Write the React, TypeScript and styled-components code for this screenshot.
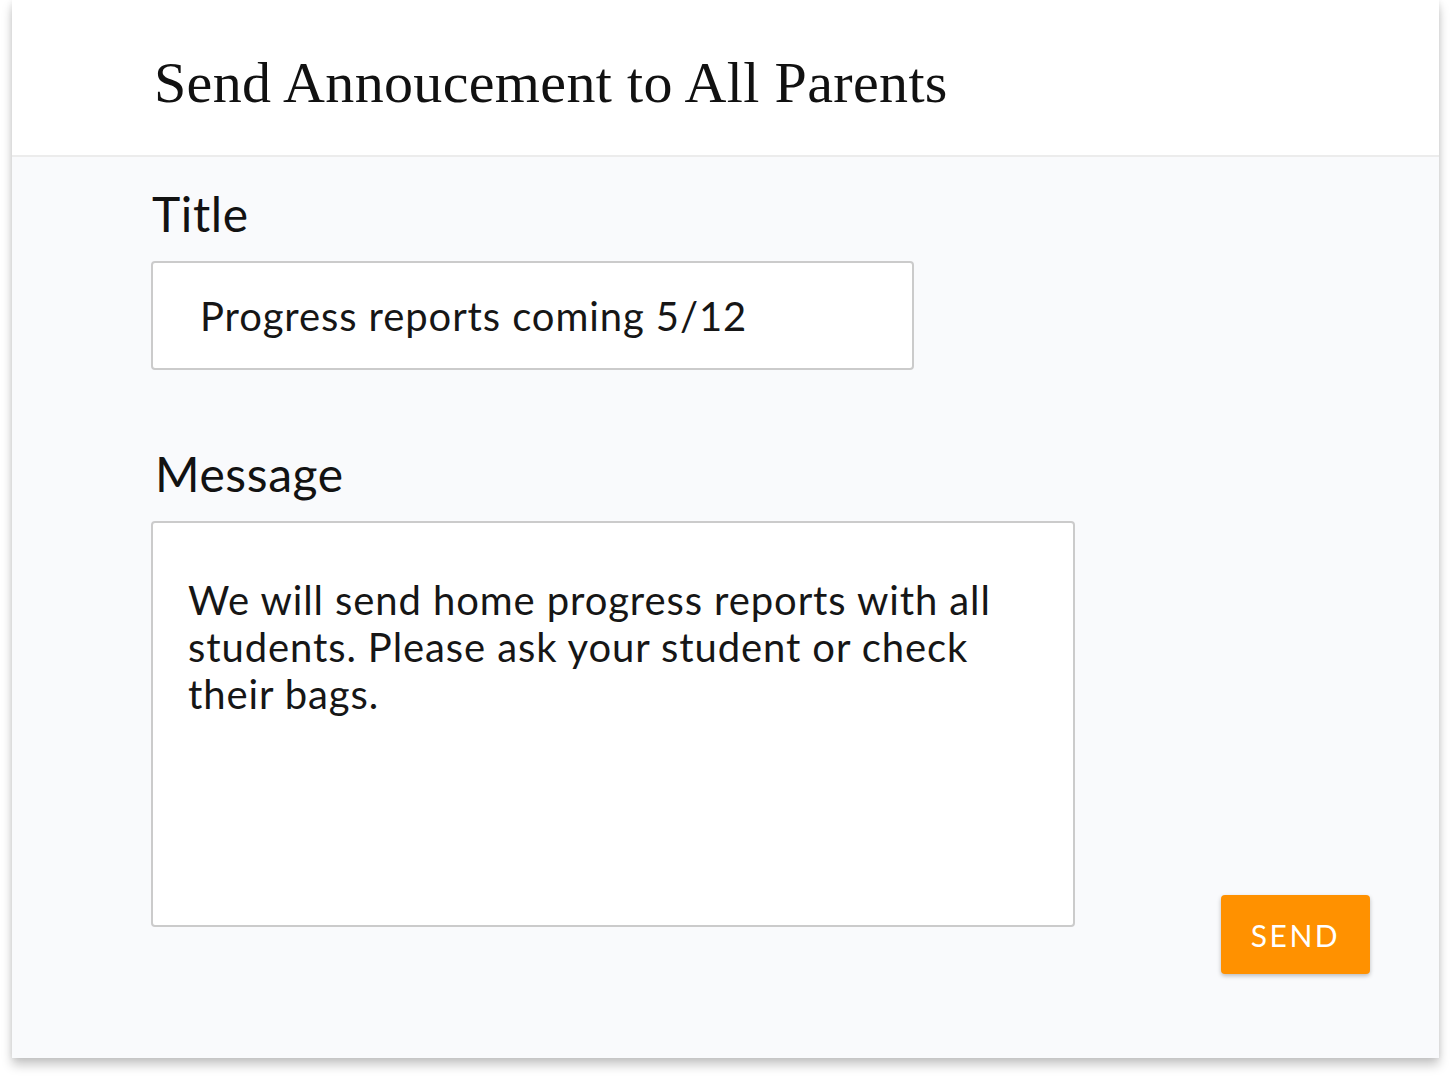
import React from "react";
import styled, { createGlobalStyle } from "styled-components";

const Global = createGlobalStyle`
  html, body { margin: 0; padding: 0; background: #ffffff; }
  * { box-sizing: border-box; }
`;

const Page = styled.div`
  padding: 0 13px 25px 12px;
  width: 1452px;
  height: 1083px;
  overflow: hidden;
`;

const Card = styled.section`
  width: 1427px;
  height: 1058px;
  background: #f9fafc;
  display: flex;
  flex-direction: column;
  box-shadow: 0 7px 10px rgba(0, 0, 0, 0.22), 0 0 6px rgba(0, 0, 0, 0.08);
`;

const Header = styled.header`
  height: 157px;
  flex: none;
  background: #ffffff;
  border-bottom: 2px solid #ececec;
  display: flex;
  align-items: center;
  padding-left: 142px;
  padding-top: 10px;
`;

const Heading = styled.h1`
  margin: 0;
  font-family: "Liberation Serif", "Times New Roman", serif;
  font-weight: 400;
  font-size: 58px;
  color: #111111;
  letter-spacing: 0.35px;
`;

const Body = styled.div`
  position: relative;
  flex: 1;
  padding: 29px 0 0 139px;
  display: flex;
  flex-direction: column;
  font-family: Lato, "Open Sans", sans-serif;
`;

const Label = styled.label<{ $top?: number }>`
  display: block;
  font-size: 48px;
  line-height: 56px;
  color: #121212;
  letter-spacing: 0.6px;
  margin-top: ${(p) => p.$top ?? 0}px;
  margin-left: ${(p) => (p.$top ? 4 : 1)}px;
`;

const TextInput = styled.input`
  margin-top: 19px;
  width: 763px;
  height: 109px;
  border: 2px solid #cbcbcb;
  border-radius: 4px;
  background: #ffffff;
  padding: 0 0 0 47px;
  font-family: Lato, "Open Sans", sans-serif;
  font-size: 40px;
  color: #161616;
  letter-spacing: 0.9px;
  outline: none;
`;

const TextArea = styled.textarea`
  margin-top: 19px;
  width: 924px;
  height: 406px;
  border: 2px solid #cbcbcb;
  border-radius: 4px;
  background: #ffffff;
  padding: 54px 60px 0 35px;
  font-family: Lato, "Open Sans", sans-serif;
  font-size: 40px;
  line-height: 47px;
  color: #161616;
  letter-spacing: 0.9px;
  resize: none;
  outline: none;
`;

const Footer = styled.div`
  position: absolute;
  right: 69px;
  bottom: 84px;
`;

const SendButton = styled.button`
  width: 149px;
  height: 79px;
  border: none;
  border-radius: 4px;
  background: #ff9100;
  color: #ffffff;
  font-family: Lato, "Open Sans", sans-serif;
  font-size: 30px;
  letter-spacing: 2.5px;
  box-shadow: 0 2px 4px rgba(0, 0, 0, 0.25);
  cursor: pointer;
`;

export default function App() {
  return (
    <Page>
      <Global />
      <Card>
        <Header>
          <Heading>Send Annoucement to All Parents</Heading>
        </Header>
        <Body>
          <Label>Title</Label>
          <TextInput readOnly value="Progress reports coming 5/12" />
          <Label $top={76}>Message</Label>
          <TextArea
            readOnly
            value="We will send home progress reports with all students. Please ask your student or check their bags."
          />
          <Footer>
            <SendButton>SEND</SendButton>
          </Footer>
        </Body>
      </Card>
    </Page>
  );
}
